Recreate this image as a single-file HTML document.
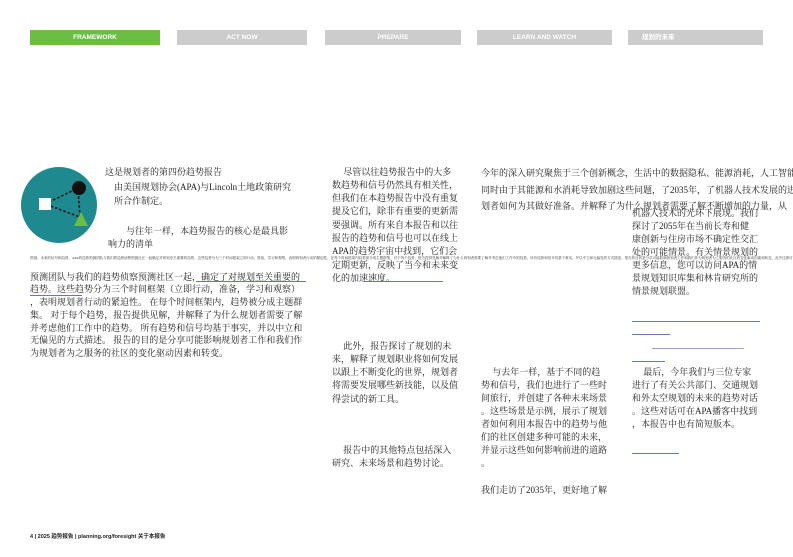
<!DOCTYPE html>
<html><head><meta charset="utf-8"><style>
html,body{margin:0;padding:0;background:#fff;}
body{width:793px;height:557px;position:relative;overflow:hidden;font-family:"Liberation Serif","Noto Serif CJK SC","Noto Sans CJK SC",serif;color:#222;}
.tab{position:absolute;top:30px;height:15px;background:#cccccc;color:#fff;font:bold 6.5px "Liberation Sans","Noto Sans CJK SC",sans-serif;line-height:15px;text-align:center;}
.t{position:absolute;font-size:9px;line-height:13.2px;white-space:nowrap;}
.u{position:absolute;height:1px;background:#6a75b8;}
.tiny{position:absolute;font-size:3.5px;line-height:4px;white-space:nowrap;color:#333;width:793px;overflow:hidden;}
</style></head><body>
<div class="tab" style="left:30px;width:130px;background:#6cbd45;">FRAMEWORK</div>
<div class="tab" style="left:177px;width:130px;">ACT NOW</div>
<div class="tab" style="left:325px;width:136px;">PREPARE</div>
<div class="tab" style="left:477px;width:135px;">LEARN AND WATCH</div>
<div class="tab" style="left:628px;width:135px;text-align:left;"><span style="margin-left:14px">规划的未来</span></div>

<svg style="position:absolute;left:20px;top:167px" width="80" height="80" viewBox="0 0 80 80">
<circle cx="39" cy="38" r="38" fill="#1e8a8f"/>
<path d="M25 37 L58 21 L60 50 Z" fill="none" stroke="#111" stroke-width="1.6" stroke-dasharray="2.5 2"/>
<rect x="19" y="31" width="12" height="12" fill="#fff"/>
<circle cx="59" cy="21" r="7" fill="#111"/>
<polygon points="61,45 54,59 68,59" fill="#6cbd45"/>
</svg>

<div class="t" style="left:105px;top:166px;">这是规划者的第四份趋势报告</div>
<div class="t" style="left:114px;top:180px;line-height:14px;">由美国规划协会(APA)与Lincoln土地政策研究<br>所合作制定。</div>
<div class="t" style="left:108px;top:225px;line-height:13px;">&nbsp;&nbsp;&nbsp;&nbsp;&nbsp;&nbsp;&nbsp;&nbsp;与往年一样，本趋势报告的核心是最具影<br>响力的清单</div>
<div class="tiny" style="left:30px;top:256px;width:763px;">预测、未来的信号和趋势，APA的趋势预测团队与我们的趋势侦察预测社区一起确定对规划至关重要的趋势，这些趋势分为三个时间框架立即行动、准备、学习和观察，表明规划者行动的紧迫性。在每个时间框架内趋势被分成主题群集。对于每个趋势，报告提供见解并解释了为什么规划者需要了解并考虑他们工作中的趋势。所有趋势和信号均基于事实，并以中立和无偏见的方式描述。报告的目的是分享可能影响规划者工作和我们作为规划者为之服务的社区的变化驱动因素和转变，此外还探讨了规划的未来以及规划者将需要发展哪些新技能以及值得尝试的新工具，报告中的其他特点包括深入研究未来场景和趋势讨论</div>

<div class="t" style="left:30px;top:270.5px;line-height:12.8px;">预测团队与我们的趋势侦察预测社区一起，确定了对规划至关重要的<br>趋势。这些趋势分为三个时间框架（立即行动，准备，学习和观察）<br>，表明规划者行动的紧迫性。 在每个时间框架内，趋势被分成主题群<br>集。 对于每个趋势，报告提供见解，并解释了为什么规划者需要了解<br>并考虑他们工作中的趋势。 所有趋势和信号均基于事实，并以中立和<br>无偏见的方式描述。 报告的目的是分享可能影响规划者工作和我们作<br>为规划者为之服务的社区的变化驱动因素和转变。</div>
<div class="u" style="left:196px;top:281px;width:110px;"></div>
<div class="u" style="left:30px;top:295px;width:52px;"></div>

<div class="t" style="left:332px;top:165.5px;line-height:13.3px;">&nbsp;&nbsp;&nbsp;&nbsp;&nbsp;尽管以往趋势报告中的大多<br>数趋势和信号仍然具有相关性，<br>但我们在本趋势报告中没有重复<br>提及它们，除非有重要的更新需<br>要强调。所有来自本报告和以往<br>报告的趋势和信号也可以在线上<br>APA的趋势宇宙中找到，它们会<br>定期更新，反映了当今和未来变<br>化的加速速度。</div>
<div class="u" style="left:365px;top:281px;width:78px;"></div>

<div class="t" style="left:332px;top:339.5px;line-height:13.3px;">&nbsp;&nbsp;&nbsp;&nbsp;&nbsp;此外，报告探讨了规划的未<br>来，解释了规划职业将如何发展<br>以跟上不断变化的世界，规划者<br>将需要发展哪些新技能，以及值<br>得尝试的新工具。</div>
<div class="t" style="left:332px;top:443.5px;line-height:13.3px;">&nbsp;&nbsp;&nbsp;&nbsp;&nbsp;报告中的其他特点包括深入<br>研究、未来场景和趋势讨论。</div>

<div class="t" style="left:481px;top:165px;line-height:16.5px;width:312px;overflow:hidden;">今年的深入研究聚焦于三个创新概念，生活中的数据隐私、能源消耗，人工智能<br>同时由于其能源和水消耗导致加剧这些问题，了2035年，了机器人技术发展的进展<br>划者如何为其做好准备。并解释了为什么规划者需要了解不断增加的力量，从</div>

<div class="t" style="left:632px;top:206.5px;line-height:13px;">机器人技术的光环下展现。我们<br>探讨了2055年在当前长寿和健<br>康创新与住房市场不确定性交汇<br>处的可能情景。有关情景规划的<br>更多信息，您可以访问APA的情<br>景规划知识库集和林肯研究所的<br>情景规划联盟。</div>
<div class="u" style="left:632px;top:321px;width:128px;"></div>
<div class="u" style="left:632px;top:334px;width:38px;"></div>
<div class="u" style="left:652px;top:348px;width:92px;background:#9aa0d0;"></div>
<div class="u" style="left:632px;top:361px;width:33px;"></div>

<div class="t" style="left:481px;top:365.5px;line-height:13.1px;">&nbsp;&nbsp;&nbsp;&nbsp;&nbsp;与去年一样，基于不同的趋<br>势和信号，我们也进行了一些时<br>间旅行，并创建了各种未来场景<br>。这些场景是示例，展示了规划<br>者如何利用本报告中的趋势与他<br>们的社区创建多种可能的未来，<br>并显示这些如何影响前进的道路<br>。</div>
<div class="t" style="left:481px;top:483.5px;">我们走访了2035年，更好地了解</div>

<div class="t" style="left:632px;top:365.5px;line-height:13px;">&nbsp;&nbsp;&nbsp;&nbsp;&nbsp;最后，今年我们与三位专家<br>进行了有关公共部门、交通规划<br>和外太空规划的未来的趋势对话<br>。这些对话可在APA播客中找到<br>，本报告中也有简短版本。</div>
<div class="u" style="left:632px;top:453px;width:47px;"></div>

<div style="position:absolute;left:30px;top:532px;font:bold 5.5px 'Liberation Sans','Noto Sans CJK SC',sans-serif;color:#222;">4 | 2025 趋势报告 | planning.org/foresight 关于本报告</div>
</body></html>
